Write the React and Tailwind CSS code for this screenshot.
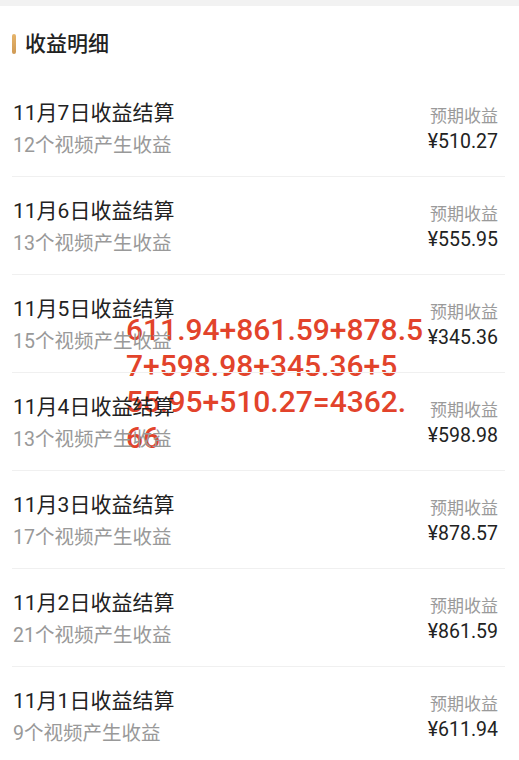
const rows = [
  { day: 7, count: 12, amount: '510.27' },
  { day: 6, count: 13, amount: '555.95' },
  { day: 5, count: 15, amount: '345.36' },
  { day: 4, count: 13, amount: '598.98' },
  { day: 3, count: 17, amount: '878.57' },
  { day: 2, count: 21, amount: '861.59' },
  { day: 1, count: 9, amount: '611.94' },
];

const sumLines = ['611.94+861.59+878.5', '7+598.98+345.36+5', '55.95+510.27=4362.', '66'];

export default function App() {
  return (
    <div className="relative h-[760px] w-[519px] overflow-hidden bg-white font-['Roboto','Noto_Sans_CJK_SC',sans-serif]">
      <div className="h-[6px] bg-[#f2f2f2]" />

      {/* Header */}
      <div className="flex h-[73px] items-center gap-[9px] pl-3 pt-[3px]">
        <div className="h-[20px] w-[4px] rounded-full bg-gradient-to-b from-[#e6b46a] to-[#cf9a55]" />
        <span className="text-[21px] font-medium leading-7 text-[#222]">收益明细</span>
      </div>

      {/* Rows */}
      <div className="relative z-10 ml-3 mr-[14px]">
        {rows.map((r, i) => (
          <div key={r.day} className={`flex justify-between pr-[7px] ${i > 0 ? 'border-t border-[#f0f0f0]' : ''}`}>
            <div className="flex flex-col pb-[17px] pl-[1px] pt-[20px]">
              <span className="text-[21px] leading-7 text-[#222]">11月{r.day}日收益结算</span>
              <span className="mt-[6px] text-[19.5px] leading-[26px] text-[#999]">{r.count}个视频产生收益</span>
            </div>
            <div className="flex flex-col items-end pt-[26px]">
              <span className="text-[17px] leading-[22px] text-[#9a9a9a]">预期收益</span>
              <span className="mt-[3px] text-[19.5px] leading-6 text-[#222]">¥{r.amount}</span>
            </div>
          </div>
        ))}
      </div>

      {/* Handwritten sum overlay */}
      <div className="absolute left-[126px] top-[312px] z-0 text-[30px] font-medium leading-[36px] text-[#e2432b] [text-shadow:0_0_3px_#fff,0_0_2px_#fff]">
        {sumLines.map((l) => (
          <div key={l}>{l}</div>
        ))}
      </div>
    </div>
  );
}
